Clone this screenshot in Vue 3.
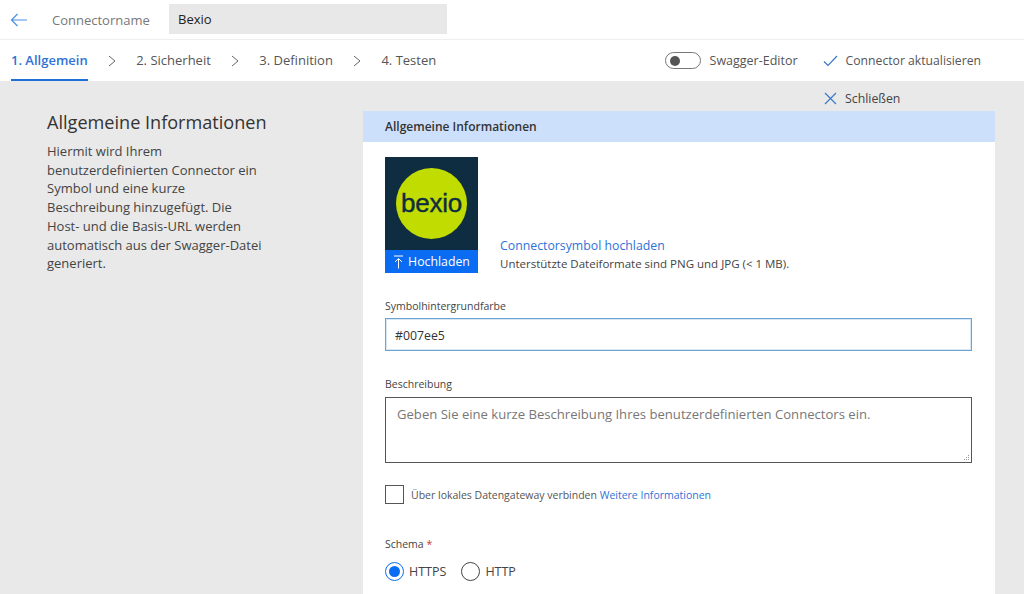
<script setup>
const steps = [
  { label: '1. Allgemein', active: true },
  { label: '2. Sicherheit', active: false },
  { label: '3. Definition', active: false },
  { label: '4. Testen', active: false },
];
</script>

<template>
  <div class="page">
    <header class="name-bar">
      <svg class="back" width="18" height="14" viewBox="0 0 18 14" fill="none" stroke="#4a90e2" stroke-width="1.2">
        <path d="M17 7H1.500M7.500 1L1.500 7l6 6" />
      </svg>
      <span class="name-label">Connectorname</span>
      <div class="name-input">Bexio</div>
    </header>

    <nav class="steps">
      <template v-for="(step, i) in steps" :key="step.label">
        <svg v-if="i > 0" class="chevron" width="8" height="12" viewBox="0 0 8 12" fill="none" stroke="#666" stroke-width="1">
          <path d="M1 1l6 5-6 5" />
        </svg>
        <a class="step" :class="{ active: step.active }">{{ step.label }}</a>
      </template>
      <div class="actions">
        <span class="toggle"><span class="knob"></span></span>
        <span class="toggle-label">Swagger-Editor</span>
        <svg class="check" width="15" height="12" viewBox="0 0 15 12" fill="none" stroke="#3a78c8" stroke-width="1.2">
          <path d="M1 6.500l4 4L14 1" />
        </svg>
        <span class="action-label">Connector aktualisieren</span>
      </div>
    </nav>

    <main class="body">
      <aside class="intro">
        <h2>Allgemeine Informationen</h2>
        <p>Hiermit wird Ihrem benutzerdefinierten Connector ein Symbol und eine kurze Beschreibung hinzugefügt. Die Host- und die Basis-URL werden automatisch aus der Swagger-Datei generiert.</p>
      </aside>

      <section class="main-col">
        <div class="close-row">
          <svg width="13" height="13" viewBox="0 0 13 13" fill="none" stroke="#3a78c8" stroke-width="1.2">
            <path d="M1 1l11 11M12 1L1 12" />
          </svg>
          <span>Schließen</span>
        </div>

        <div class="card">
          <div class="card-head">Allgemeine Informationen</div>
          <div class="card-body">
            <div class="upload">
              <div class="icon-box">
                <div class="icon-art">
                  <div class="logo"><span>bexio</span></div>
                </div>
                <div class="icon-btn">
                  <svg width="11" height="14" viewBox="0 0 11 14" fill="none" stroke="#fff" stroke-width="1">
                    <path d="M1 1h9M5.500 13.500V4M2 7l3.500-3.500L9 7" />
                  </svg>
                  <span>Hochladen</span>
                </div>
              </div>
              <div class="upload-text">
                <a>Connectorsymbol hochladen</a>
                <span>Unterstützte Dateiformate sind PNG und JPG (&lt; 1 MB).</span>
              </div>
            </div>

            <label class="field-label first">Symbolhintergrundfarbe</label>
            <div class="color-input">#007ee5</div>

            <label class="field-label second">Beschreibung</label>
            <div class="desc-input">
              Geben Sie eine kurze Beschreibung Ihres benutzerdefinierten Connectors ein.
              <svg class="grip" width="7" height="7" viewBox="0 0 7 7" fill="#999">
                <rect x="5" y="1" width="1" height="1" />
                <rect x="3" y="3" width="1" height="1" />
                <rect x="5" y="3" width="1" height="1" />
                <rect x="1" y="5" width="1" height="1" />
                <rect x="3" y="5" width="1" height="1" />
                <rect x="5" y="5" width="1" height="1" />
              </svg>
            </div>

            <div class="gateway">
              <span class="checkbox"></span>
              <span>Über lokales Datengateway verbinden <a>Weitere Informationen</a></span>
            </div>

            <label class="field-label third">Schema <em>*</em></label>
            <div class="radios">
              <span class="radio on"><i></i></span>
              <span class="radio-text">HTTPS</span>
              <span class="radio"></span>
              <span class="radio-text">HTTP</span>
            </div>
          </div>
        </div>
      </section>
    </main>
  </div>
</template>

<style scoped>
.page {
  width: 1024px;
  height: 594px;
  overflow: hidden;
  background: #e9e9e9;
  font-family: "Open Sans", "Noto Sans", sans-serif;
  color: #333;
  display: flex;
  flex-direction: column;
}

.name-bar {
  height: 39px;
  flex: none;
  background: #fff;
  border-bottom: 1px solid #eee;
  display: flex;
  align-items: center;
  padding-left: 10px;
}

.back {
  margin-right: 24px;
}

.name-label {
  font-size: 13px;
  color: #777;
  width: 115px;
  margin-right: 2px;
}

.name-input {
  width: 278px;
  height: 30px;
  margin-top: -1px;
  box-sizing: border-box;
  background: #e8e8e8;
  padding-left: 9px;
  line-height: 30px;
  font-size: 13px;
  color: #222;
}

.steps {
  height: 41px;
  flex: none;
  background: #fff;
  display: flex;
  align-items: center;
  padding-left: 11px;
}

.step {
  font-size: 13px;
  color: #555;
  height: 41px;
  line-height: 40px;
  box-sizing: border-box;
}

.step.active {
  color: #2f72d6;
  font-weight: 600;
  border-bottom: 2px solid #1f6fd8;
}

.chevron {
  margin: 0 20.500px 0 20px;
}

.actions {
  margin-left: auto;
  display: flex;
  align-items: center;
  padding-right: 43px;
  color: #555;
}

.toggle {
  width: 36px;
  height: 17px;
  box-sizing: border-box;
  border: 1px solid #777;
  border-radius: 9px;
  display: flex;
  align-items: center;
  padding-left: 4px;
  margin-right: 9px;
}

.knob {
  width: 10px;
  height: 10px;
  border-radius: 50%;
  background: #555;
}

.toggle-label {
  font-size: 12.500px;
  margin-right: 25px;
}

.check {
  margin-right: 8px;
}

.action-label {
  font-size: 12.200px;
}

.body {
  flex: 1;
  display: flex;
  min-height: 0;
}

.intro {
  width: 363px;
  flex: none;
  box-sizing: border-box;
  padding: 29px 0 0 47px;
}

.intro h2 {
  margin: 0 0 8px;
  font-size: 18.100px;
  line-height: 24px;
  font-weight: 400;
  color: #333;
}

.intro p {
  margin: 0;
  width: 219px;
  font-size: 13px;
  line-height: 18.700px;
  color: #444;
}

.main-col {
  width: 632px;
  flex: none;
}

.close-row {
  height: 30px;
  display: flex;
  align-items: center;
  padding: 4px 0 0 461px;
  box-sizing: border-box;
  font-size: 12.300px;
  color: #444;
}

.close-row svg {
  margin-right: 8px;
}

.card {
  background: #fff;
  height: 600px;
}

.card-head {
  height: 31px;
  background: #cde0fb;
  padding-left: 22px;
  font-size: 12px;
  font-weight: 600;
  line-height: 31px;
  color: #333;
}

.card-body {
  padding: 15px 23px 0 22px;
}

.upload {
  display: flex;
  align-items: flex-end;
}

.icon-box {
  width: 93px;
  height: 116px;
  background: #0f2d40;
  display: flex;
  flex-direction: column;
  margin-right: 22px;
}

.icon-art {
  flex: 1;
  display: flex;
  align-items: center;
  justify-content: center;
}

.logo {
  width: 71px;
  height: 71px;
  border-radius: 50%;
  background: #c1dc00;
  display: flex;
  align-items: center;
  justify-content: center;
}

.logo span {
  font-family: "Liberation Sans", sans-serif;
  font-size: 26px;
  letter-spacing: -0.2px;
  color: #0f2d40;
  -webkit-text-stroke: 0.4px #0f2d40;
}

.icon-btn {
  height: 23px;
  background: #0a6cf2;
  color: #fff;
  font-size: 12.300px;
  display: flex;
  align-items: center;
  justify-content: center;
  gap: 4px;
}

.upload-text {
  display: flex;
  flex-direction: column;
  font-size: 11.500px;
  line-height: 18px;
  color: #444;
}

.upload-text a {
  font-size: 12.300px;
  color: #2f72d6;
}

.field-label {
  display: block;
  font-size: 10.500px;
  line-height: 16px;
  color: #444;
}

.field-label.first {
  margin-top: 25px;
  margin-bottom: 4px;
}

.field-label.second {
  margin-top: 25px;
  margin-bottom: 5px;
}

.field-label.third {
  margin-top: 32px;
  margin-bottom: 10px;
}

.field-label em {
  color: #c33;
  font-style: normal;
}

.color-input {
  height: 33px;
  box-sizing: border-box;
  border: 1px solid #6fa3cf;
  box-shadow: inset 0 0 0 1px #d5e8f8;
  padding-left: 9px;
  line-height: 33px;
  font-size: 12.300px;
  color: #333;
}

.desc-input {
  position: relative;
  height: 66px;
  box-sizing: border-box;
  border: 1px solid #555;
  padding: 7px 11px;
  font-size: 13.100px;
  line-height: 18px;
  color: #777;
}

.grip {
  position: absolute;
  right: 1px;
  bottom: 1px;
}

.gateway {
  display: flex;
  align-items: center;
  margin-top: 22px;
  font-size: 10.500px;
  color: #555;
}

.checkbox {
  width: 19px;
  height: 19px;
  box-sizing: border-box;
  border: 1px solid #555;
  margin-right: 7px;
}

.gateway a {
  color: #2f72d6;
}

.radios {
  display: flex;
  align-items: center;
  font-size: 12.500px;
  color: #444;
  margin-top: 3px;
}

.radio {
  width: 19px;
  height: 19px;
  box-sizing: border-box;
  border: 1px solid #444;
  border-radius: 50%;
  display: flex;
  align-items: center;
  justify-content: center;
  margin-right: 5px;
}

.radio.on {
  border-color: #0a6cf2;
}

.radio i {
  width: 11px;
  height: 11px;
  border-radius: 50%;
  background: #0a6cf2;
}

.radio-text {
  margin-right: 15px;
}
</style>
